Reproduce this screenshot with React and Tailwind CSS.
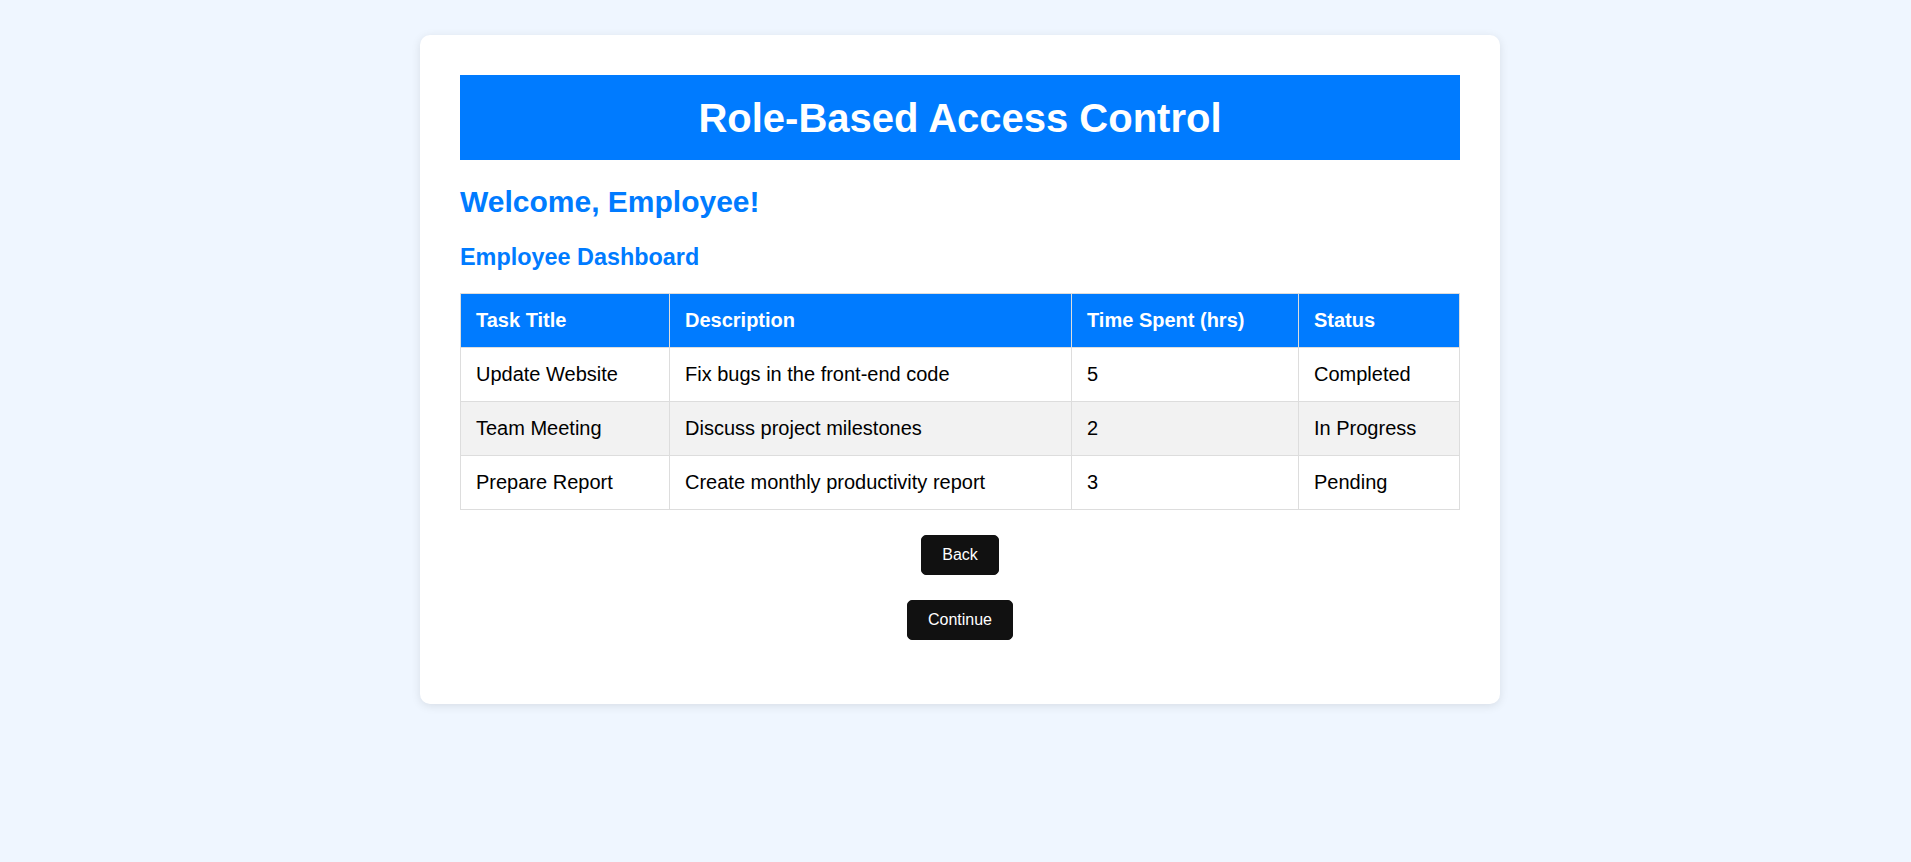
import React from "react";

const tasks = [
  { title: "Update Website", desc: "Fix bugs in the front-end code", hours: 5, status: "Completed" },
  { title: "Team Meeting", desc: "Discuss project milestones", hours: 2, status: "In Progress" },
  { title: "Prepare Report", desc: "Create monthly productivity report", hours: 3, status: "Pending" },
];

export default function App() {
  return (
    <div className="min-h-screen bg-[#eff6ff] pt-[35px] pl-[9px] flex justify-center items-start font-['Liberation_Sans',Arial,sans-serif]">
      <div className="w-[1080px] bg-white rounded-[10px] shadow-[0_2px_10px_rgba(0,0,0,0.1)] p-10">
        {/* Header */}
        <div className="h-[85px] bg-[#007bff] flex items-center justify-center">
          <h1 className="text-[40px] leading-[46px] font-bold text-white">Role-Based Access Control</h1>
        </div>

        <h2 className="mt-[25px] text-[30px] leading-[34.5px] font-bold text-[#007bff]">Welcome, Employee!</h2>
        <h3 className="mt-[24px] text-[23.4px] leading-[27px] font-bold text-[#007bff]">Employee Dashboard</h3>

        {/* Tabel tugas */}
        <table className="mt-[22px] w-full border-collapse text-[20px] leading-[23px] text-black">
          <thead>
            <tr className="bg-[#007bff] text-white">
              <th className="w-[209px] border border-[#ddd] p-[15px] text-left font-bold">Task Title</th>
              <th className="w-[402px] border border-[#ddd] p-[15px] text-left font-bold">Description</th>
              <th className="w-[227px] border border-[#ddd] p-[15px] text-left font-bold">Time Spent (hrs)</th>
              <th className="border border-[#ddd] p-[15px] text-left font-bold">Status</th>
            </tr>
          </thead>
          <tbody>
            {tasks.map((t, i) => (
              <tr key={t.title} className={i % 2 === 1 ? "bg-[#f2f2f2]" : "bg-white"}>
                <td className="border border-[#ddd] p-[15px]">{t.title}</td>
                <td className="border border-[#ddd] p-[15px]">{t.desc}</td>
                <td className="border border-[#ddd] p-[15px]">{t.hours}</td>
                <td className="border border-[#ddd] p-[15px]">{t.status}</td>
              </tr>
            ))}
          </tbody>
        </table>

        {/* Tombol */}
        <div className="mt-[25px] mb-[24px] flex flex-col items-center gap-[25px]">
          <button className="h-10 px-5 bg-[#111] border border-[#111] rounded-[5px] text-white text-base">Back</button>
          <button className="h-10 px-5 bg-[#111] border border-[#111] rounded-[5px] text-white text-base">Continue</button>
        </div>
      </div>
    </div>
  );
}
